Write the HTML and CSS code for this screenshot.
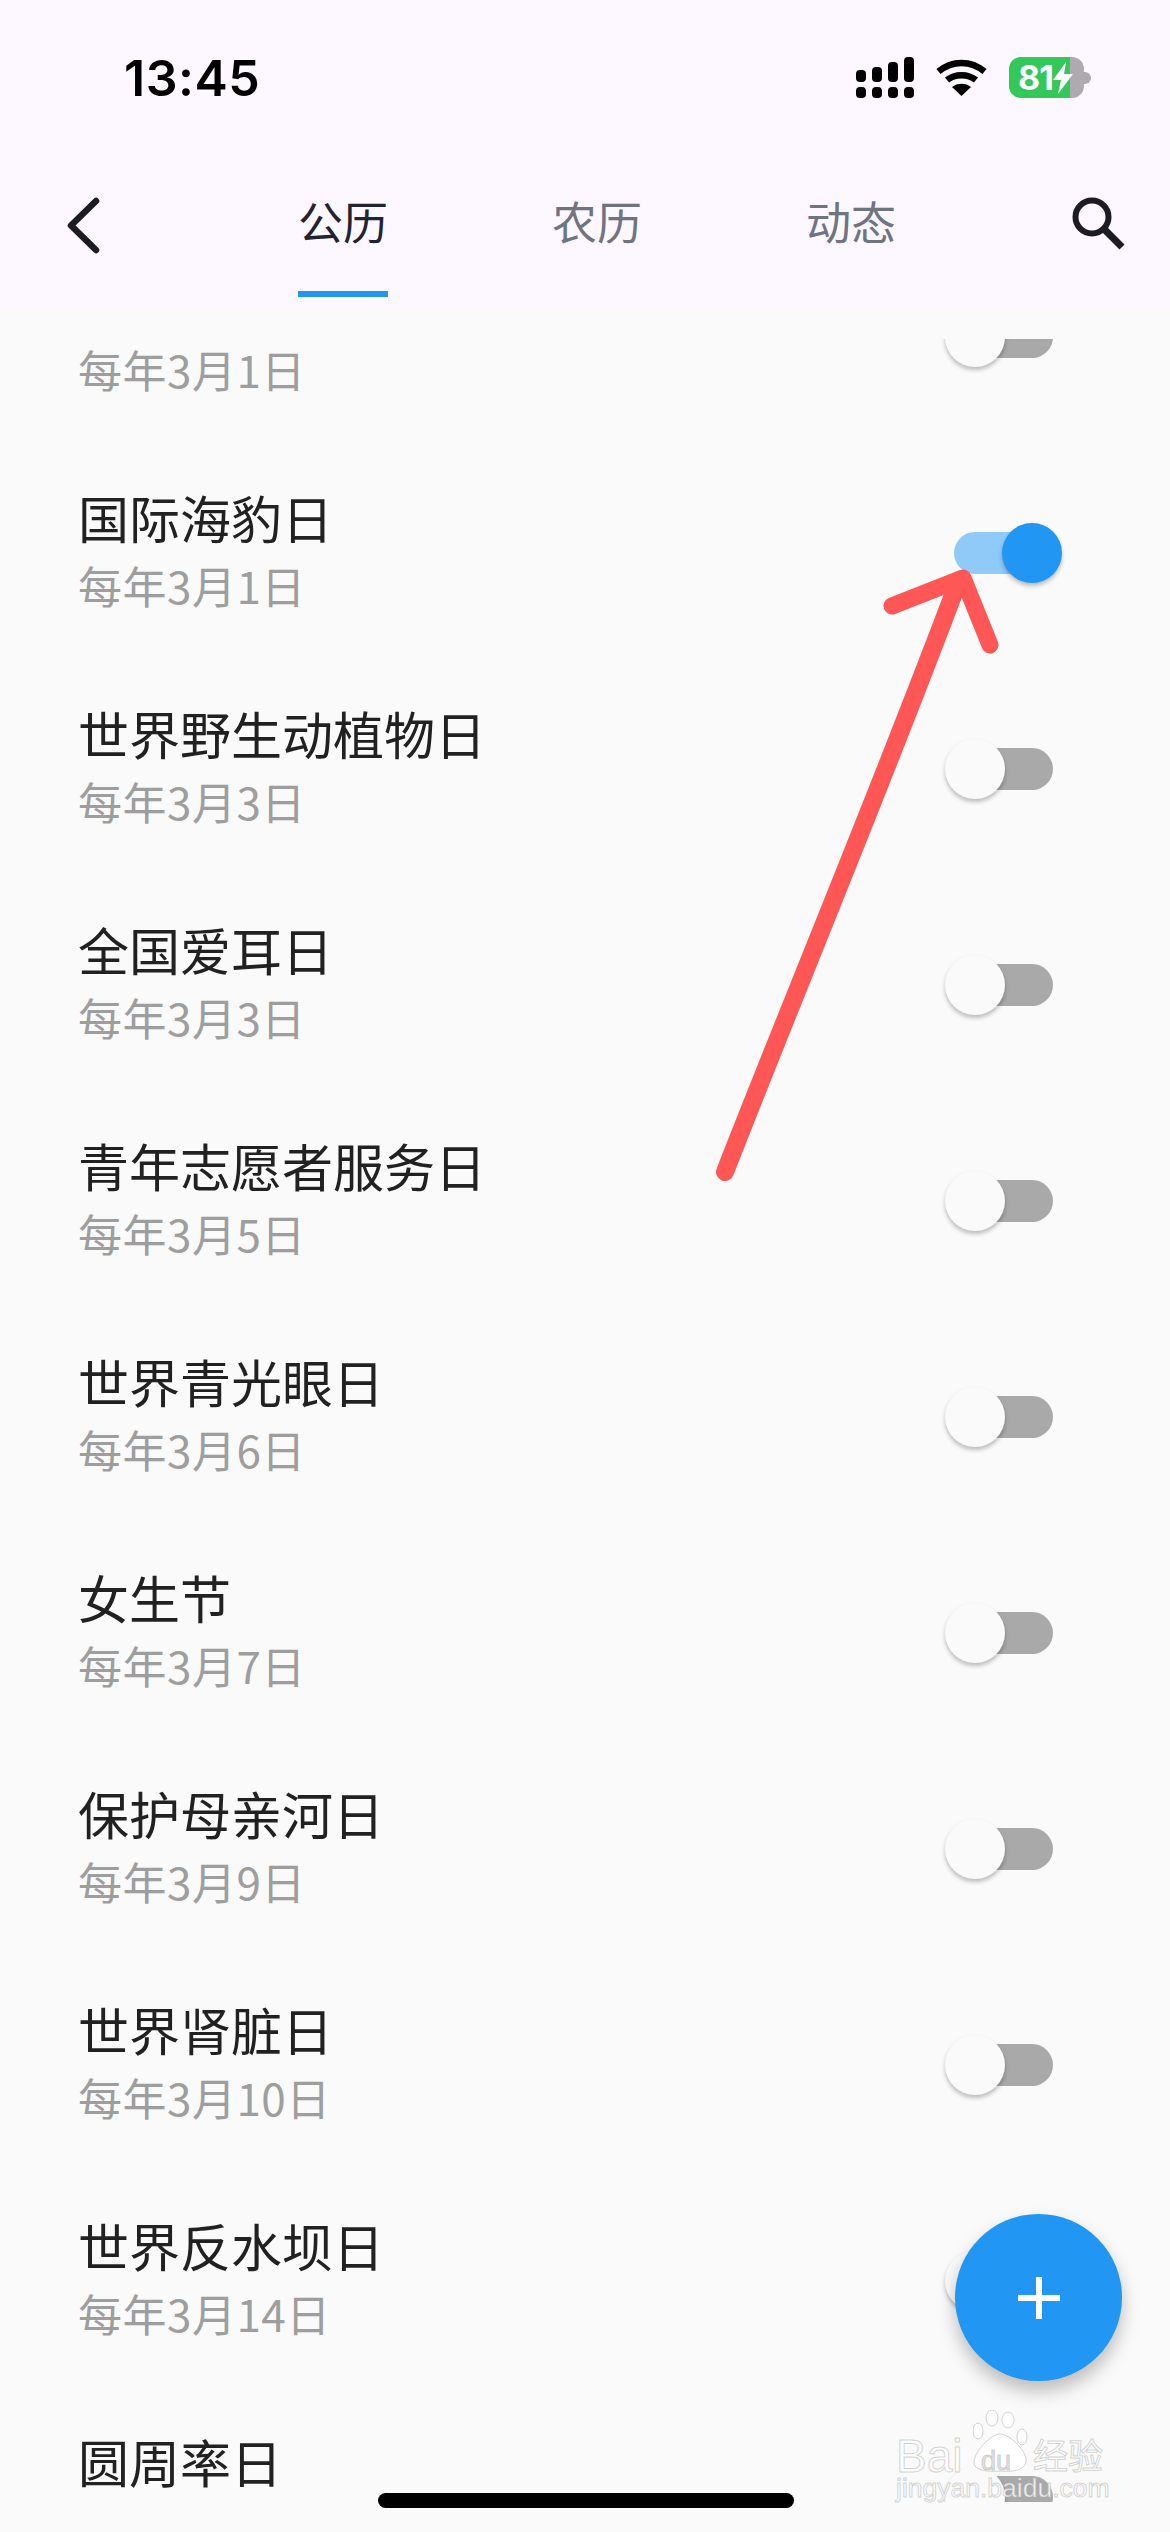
FILE: index.html
```html
<!DOCTYPE html>
<html lang="zh-CN">
<head>
    <meta charset="UTF-8">
    <meta name="viewport" content="width=device-width, initial-scale=1.0">
    <title>节日</title>
    <link rel="stylesheet" href="styles.css">
</head>
<body>
    <div class="app">
        <header class="topbar">
            <div class="status-bar">
                <span class="clock">13:45</span>
                <div class="status-icons">
                    <svg class="signal" width="58" height="41" viewBox="0 0 58 41" fill="#000">
                        <rect x="0" y="13" width="10" height="12" rx="4"/>
                        <rect x="16" y="10" width="10" height="15" rx="4"/>
                        <rect x="32" y="5" width="10" height="20" rx="4"/>
                        <rect x="48" y="0" width="10" height="25" rx="4"/>
                        <rect x="0" y="30" width="10" height="11" rx="4"/>
                        <rect x="16" y="30" width="10" height="11" rx="4"/>
                        <rect x="32" y="30" width="10" height="11" rx="4"/>
                        <rect x="48" y="30" width="10" height="11" rx="4"/>
                    </svg>
                    <svg class="wifi" width="51" height="37" viewBox="0 0 51 37">
                        <path d="M2.5 12.5 C16 1 35 1 48.5 12.5" fill="none" stroke="#000" stroke-width="6.5"/>
                        <path d="M11 21 C19 14.5 32 14.5 40 21" fill="none" stroke="#000" stroke-width="6.5"/>
                        <path d="M25.500 37 L16 28 C21 23.500 30 23.500 35 28 Z" fill="#000"/>
                    </svg>
                    <div class="battery">
                        <div class="battery-body">
                            <span class="battery-num">81</span>
                            <svg class="bolt" width="20" height="32" viewBox="0 0 20 32" fill="#fff">
                                <path d="M13 0 L0 18 H8 L5 32 L20 12 H11 Z"/>
                            </svg>
                        </div>
                        <div class="battery-nub"></div>
                    </div>
                </div>
            </div>
            <nav class="nav">
                <svg class="back" width="48" height="60" viewBox="0 0 48 60">
                    <path d="M36 4 L11 28.500 L36 53" fill="none" stroke="#1c1c22" stroke-width="6.500" stroke-linecap="round" stroke-linejoin="round"/>
                </svg>
                <div class="tabs">
                    <div class="tab active">公历</div>
                    <div class="tab">农历</div>
                    <div class="tab">动态</div>
                </div>
                <svg class="search" width="56" height="56" viewBox="0 0 56 56">
                    <circle cx="21" cy="21" r="16.500" fill="none" stroke="#1c1c22" stroke-width="6"/>
                    <path d="M33 33 L51 51" stroke="#1c1c22" stroke-width="7"/>
                </svg>
            </nav>
        </header>

        <main class="list-clip">
            <div class="list">
                <div class="row">
                    <div class="row-text"><div class="name"></div><div class="date">每年3月1日</div></div>
                    <div class="toggle"><span class="knob"></span></div>
                </div>
                <div class="row">
                    <div class="row-text"><div class="name">国际海豹日</div><div class="date">每年3月1日</div></div>
                    <div class="toggle on"><span class="knob"></span></div>
                </div>
                <div class="row">
                    <div class="row-text"><div class="name">世界野生动植物日</div><div class="date">每年3月3日</div></div>
                    <div class="toggle"><span class="knob"></span></div>
                </div>
                <div class="row">
                    <div class="row-text"><div class="name">全国爱耳日</div><div class="date">每年3月3日</div></div>
                    <div class="toggle"><span class="knob"></span></div>
                </div>
                <div class="row">
                    <div class="row-text"><div class="name">青年志愿者服务日</div><div class="date">每年3月5日</div></div>
                    <div class="toggle"><span class="knob"></span></div>
                </div>
                <div class="row">
                    <div class="row-text"><div class="name">世界青光眼日</div><div class="date">每年3月6日</div></div>
                    <div class="toggle"><span class="knob"></span></div>
                </div>
                <div class="row">
                    <div class="row-text"><div class="name">女生节</div><div class="date">每年3月7日</div></div>
                    <div class="toggle"><span class="knob"></span></div>
                </div>
                <div class="row">
                    <div class="row-text"><div class="name">保护母亲河日</div><div class="date">每年3月9日</div></div>
                    <div class="toggle"><span class="knob"></span></div>
                </div>
                <div class="row">
                    <div class="row-text"><div class="name">世界肾脏日</div><div class="date">每年3月10日</div></div>
                    <div class="toggle"><span class="knob"></span></div>
                </div>
                <div class="row">
                    <div class="row-text"><div class="name">世界反水坝日</div><div class="date">每年3月14日</div></div>
                    <div class="toggle"><span class="knob"></span></div>
                </div>
                <div class="row">
                    <div class="row-text"><div class="name">圆周率日</div><div class="date"></div></div>
                    <div class="toggle"><span class="knob"></span></div>
                </div>
            </div>
        </main>

        <!-- annotation drawn over the screenshot -->
        <svg class="arrow" width="1170" height="2532" viewBox="0 0 1170 2532" fill="none">
            <path d="M725 1172 C800 980 880 790 958 582" stroke="#ff5656" stroke-width="18" stroke-linecap="round"/>
            <path d="M892 606 L963 578 L990 645" stroke="#ff5656" stroke-width="17" stroke-linecap="round" stroke-linejoin="round"/>
        </svg>

        <button class="fab">
            <svg width="42" height="42" viewBox="0 0 42 42" fill="#fff">
                <rect x="18" y="0" width="6" height="42"/>
                <rect x="0" y="18" width="42" height="6"/>
            </svg>
        </button>

        <div class="watermark">
            <div class="wm-top">
                <span class="wm-brand">Bai</span>
                <svg class="wm-paw" width="56" height="62" viewBox="0 0 56 62" fill="rgba(255,255,255,0.85)" stroke="rgba(170,170,170,0.5)" stroke-width="1">
                    <ellipse cx="5" cy="21" rx="5" ry="8"/>
                    <ellipse cx="19" cy="8" rx="6" ry="8"/>
                    <ellipse cx="35" cy="10" rx="6" ry="8"/>
                    <ellipse cx="49" cy="27" rx="5" ry="8"/>
                    <path d="M27 24 C18 24 1 42 1 52 C1 60 12 62 27 61 C42 62 53 60 53 50 C53 40 36 24 27 24 Z"/>
                </svg>
                <span class="wm-cn">经验</span>
            </div>
            <div class="wm-url">jingyan.baidu.com</div>
            <span class="wm-du">du</span>
        </div>

        <div class="home-bar"></div>
    </div>
</body>
</html>
```

FILE: styles.css
```css
body {
    margin: 0;
    font-family: "Noto Sans CJK SC", "Noto Sans", sans-serif;
    background-color: #fafafa;
}
.app {
    position: relative;
    width: 1170px;
    height: 2532px;
    overflow: hidden;
    background-color: #fafafa;
}
.topbar {
    height: 308px;
    background-color: #fdf8ff;
}
.status-bar {
    height: 156px;
    display: flex;
    justify-content: space-between;
    align-items: flex-start;
    padding: 0 79px 0 124px;
}
.clock {
    margin-top: 48px;
    font-family: Inter, "Liberation Sans", sans-serif;
    font-size: 50px;
    font-weight: 600;
    line-height: 60px;
    letter-spacing: 0.5px;
    color: #000;
}
.status-icons {
    display: flex;
    align-items: flex-start;
    margin-top: 57px;
}
.wifi {
    margin: 2px 0 0 22px;
}
.battery {
    display: flex;
    align-items: center;
    margin-left: 22px;
}
.battery-body {
    width: 75px;
    height: 41px;
    border-radius: 12px;
    background: linear-gradient(90deg, #34c85a 0, #34c85a 61px, #aeaab0 61px);
    display: flex;
    align-items: center;
    padding-left: 9px;
    box-sizing: border-box;
    color: #fff;
}
.battery-num {
    font-family: Inter, "Liberation Sans", sans-serif;
    font-size: 34px;
    font-weight: 700;
    line-height: 41px;
    letter-spacing: -1px;
}
.battery-nub {
    width: 7px;
    height: 12px;
    border-radius: 0 6px 6px 0;
    background-color: #aeaab0;
}
.nav {
    height: 152px;
    display: flex;
    align-items: flex-start;
    padding: 0 43px 0 60px;
}
.back {
    margin-top: 41px;
}
.tabs {
    display: flex;
    gap: 164px;
    margin-left: 190px;
}
.tab {
    width: 90px;
    padding-top: 34px;
    padding-bottom: 39px;
    border-bottom: 6px solid transparent;
    font-size: 45px;
    line-height: 62px;
    text-align: center;
    white-space: nowrap;
    color: #6f7480;
}
.tab.active {
    color: #1f2430;
    border-bottom-color: #2196f3;
}
.search {
    margin-left: auto;
    margin-top: 40px;
}
.list-clip {
    height: 2163px;
    margin-top: 31px;
    overflow: hidden;
}
.list {
    margin-top: -110px;
}
.row {
    height: 216px;
    display: flex;
    justify-content: space-between;
    align-items: center;
    padding: 0 117px 0 78px;
}
.name {
    min-height: 58px;
    margin-bottom: 11px;
    font-size: 51px;
    line-height: 58px;
    color: #212121;
}
.date {
    min-height: 56px;
    margin-bottom: 5px;
    font-size: 44px;
    line-height: 56px;
    letter-spacing: 0.5px;
    color: #9e9e9e;
}
.toggle {
    position: relative;
    width: 99px;
    height: 42px;
    border-radius: 21px;
    background-color: #a9a9a9;
}
.knob {
    position: absolute;
    top: -9px;
    left: -9px;
    width: 60px;
    height: 60px;
    border-radius: 50%;
    background-color: #fafafa;
    box-shadow: 0 3px 4px rgba(0,0,0,0.25);
}
.toggle.on {
    background-color: #90caf9;
}
.toggle.on .knob {
    left: auto;
    right: -9px;
    background-color: #2196f3;
}
.arrow {
    position: absolute;
    top: 0;
    left: 0;
}
.fab {
    position: absolute;
    top: 2214px;
    left: 955px;
    width: 167px;
    height: 167px;
    padding: 0;
    border: none;
    border-radius: 50%;
    background-color: #2196f3;
    box-shadow: 0 10px 18px rgba(0,0,0,0.25);
    display: flex;
    align-items: center;
    justify-content: center;
}
.home-bar {
    position: absolute;
    top: 2493px;
    left: 378px;
    width: 416px;
    height: 15px;
    border-radius: 8px;
    background-color: #000;
}
.watermark {
    position: absolute;
    top: 2410px;
    left: 896px;
    width: 214px;
    color: rgba(255,255,255,0.85);
    -webkit-text-stroke: 1px rgba(170,170,170,0.5);
}
.wm-top {
    display: flex;
    align-items: flex-end;
    height: 64px;
}
.wm-brand {
    width: 77px;
    font-family: "Liberation Sans", sans-serif;
    font-size: 46px;
    line-height: 36px;
}
.wm-paw {
    flex-shrink: 0;
    margin-bottom: 2px;
}
.wm-cn {
    margin: 0 0 2px 4px;
    font-size: 35px;
    line-height: 36px;
    white-space: nowrap;
}
.wm-url {
    margin-top: 1px;
    font-family: "Liberation Sans", sans-serif;
    font-size: 26.5px;
    line-height: 26px;
    white-space: nowrap;
}
.wm-du {
    position: absolute;
    top: 38px;
    left: 85px;
    font-family: "Liberation Sans", sans-serif;
    font-size: 27px;
    line-height: 27px;
    color: rgba(225,225,225,0.9);
}
```
